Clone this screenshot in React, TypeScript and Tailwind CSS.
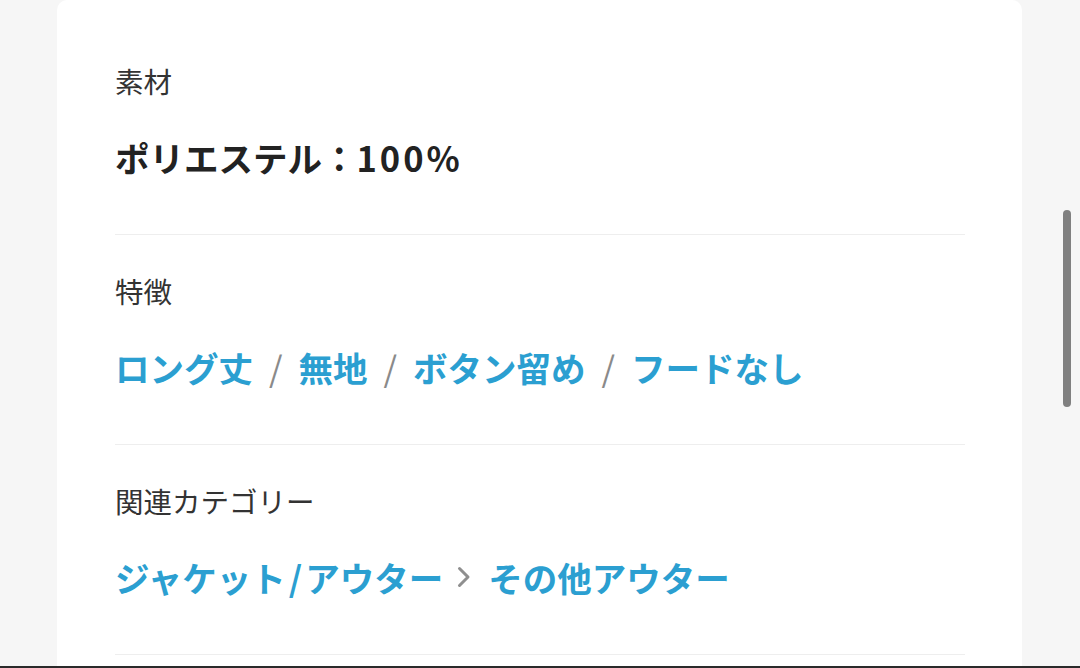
import React from "react";

const FONT = { fontFamily: '"Noto Sans CJK JP", "Noto Sans", sans-serif' };

function Slash() {
  return <span className="mx-[16px] font-normal text-[#8a8a8a]">/</span>;
}

function Chevron() {
  return (
    <svg width="14" height="22" viewBox="0 0 14 22" className="ml-[14px] mr-[17px] shrink-0">
      <path d="M2.5 2.5 L11 11 L2.5 19.5" fill="none" stroke="#8f8f8f" strokeWidth="3" strokeLinecap="round" strokeLinejoin="round" />
    </svg>
  );
}

function Section({ label, children }: { label: string; children: React.ReactNode }) {
  return (
    <div className="pt-[36px] pb-[53px] border-b border-[#eeeeee]">
      <div className="text-[28.5px] leading-[40px] text-[#333333]">{label}</div>
      <div className="mt-[32px] text-[34.5px] leading-[48px] font-bold flex items-center whitespace-nowrap">{children}</div>
    </div>
  );
}

export default function App() {
  const blue = "text-[#2b9fd1]";
  return (
    <div className="relative w-[1080px] h-[668px] overflow-hidden bg-[#f6f6f6] flex flex-col" style={FONT}>
      <div className="flex-1 min-h-0 ml-[57px] w-[965px] bg-white rounded-t-[10px] pl-[58px] pr-[57px] pt-[25px] overflow-hidden">
        <Section label="素材">
          <span className="text-[#222222]">
            ポリエステル：<span className="tracking-[3px]">100%</span>
          </span>
        </Section>
        <Section label="特徴">
          <span className={blue}>ロング丈</span>
          <Slash />
          <span className={blue}>無地</span>
          <Slash />
          <span className={blue}>ボタン留め</span>
          <Slash />
          <span className={blue}>フードなし</span>
        </Section>
        <Section label="関連カテゴリー">
          <span className={blue}>
            ジャケット<span className="mx-[3px]">/</span>アウター
          </span>
          <Chevron />
          <span className={blue}>その他アウター</span>
        </Section>
      </div>
      <div className="h-[2px] bg-[#2a2a2a] shrink-0" />
      <div className="absolute left-[1063px] top-[210px] w-[8px] h-[197px] rounded-full bg-[#808080]" />
    </div>
  );
}
